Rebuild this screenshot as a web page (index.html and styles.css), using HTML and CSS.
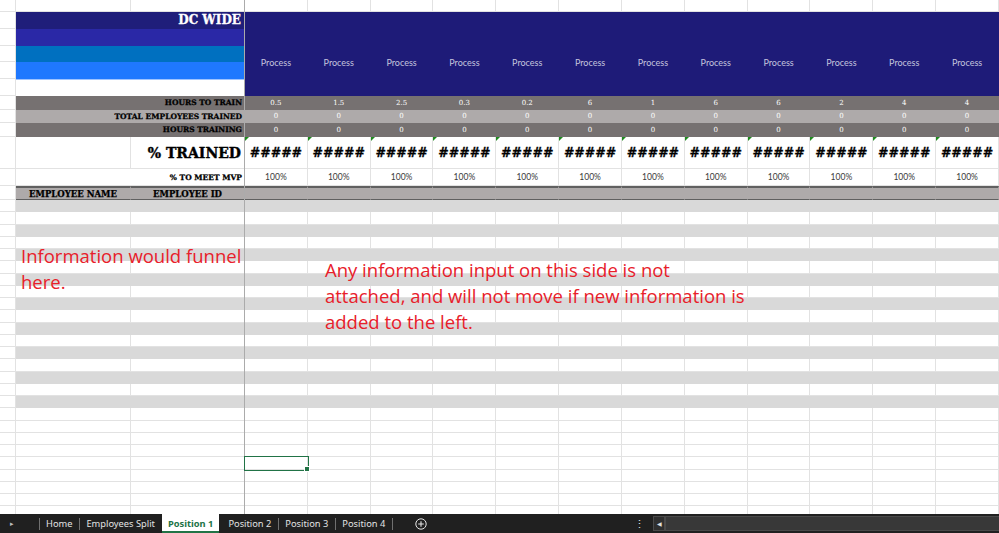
FILE: index.html
```html
<!DOCTYPE html>
<html lang="en">

<head>
  <meta charset="UTF-8" />
  <meta name="viewport" content="width=device-width, initial-scale=1.0" />
  <title>Position 1 - Training Tracker</title>
  <link rel="stylesheet" href="styles.css">
</head>

<body>
  <div class="workbook">
    <div class="sheet" id="sheet"></div>

    <div class="note note-left">Information would funnel<br>here.</div>
    <div class="note note-right">Any information input on this side is not<br>attached, and will not move if new information is<br>added to the left.</div>
  </div>

  <div class="tabbar">
    <span class="tab-arrow">&#9656;</span>
    <span class="tab-sep"></span>
    <span class="tab">Home</span>
    <span class="tab-sep"></span>
    <span class="tab">Employees Split</span>
    <span class="tab active">Position 1</span>
    <span class="tab">Position 2</span>
    <span class="tab-sep"></span>
    <span class="tab">Position 3</span>
    <span class="tab-sep"></span>
    <span class="tab">Position 4</span>
    <span class="tab-sep"></span>
    <span class="tab-add">
      <svg width="12" height="12" viewBox="0 0 12 12">
        <circle cx="6" cy="6" r="5.2" fill="none" stroke="#e6e6e6" stroke-width="1" />
        <path d="M6 3.2v5.6M3.2 6h5.6" stroke="#e6e6e6" stroke-width="1.1" />
      </svg>
    </span>
    <span class="tab-fill"></span>
    <span class="tab-dots">&#8942;</span>
    <span class="scroll-left">&#9664;</span>
    <span class="scroll-track"></span>
  </div>

  <script>
    const hours = ['0.5', '1.5', '2.5', '0.3', '0.2', '6', '1', '6', '6', '2', '4', '4'];
    const sheet = document.getElementById('sheet');

    function cell(cls, text) {
      const d = document.createElement('div');
      d.className = 'cell' + (cls ? ' ' + cls : '');
      if (text) d.textContent = text;
      sheet.appendChild(d);
      return d;
    }

    function repeat(cls, text) {
      hours.forEach(() => cell(cls, text));
    }

    // row 1
    cell('col-a'); cell(); cell(); repeat('');

    // title band + process headers
    cell('col-a'); cell('band band-1', 'DC WIDE'); repeat('process', 'Process');
    ['band-2', 'band-3', 'band-4', 'band-5'].forEach(b => {
      cell('col-a');
      cell('band ' + b);
    });

    // totals
    const stats = [
      ['HOURS TO TRAIN', hours, 'dark'],
      ['TOTAL EMPLOYEES TRAINED', hours.map(() => '0'), 'light'],
      ['HOURS TRAINING', hours.map(() => '0'), 'dark']
    ];
    stats.forEach(([label, values, tone]) => {
      cell('col-a');
      cell('stat-label ' + tone, label);
      values.forEach(v => cell('stat ' + tone, v));
    });

    // percentages
    cell('col-a'); cell('pct-blank'); cell('pct-label', '% TRAINED'); repeat('pct', '#####');
    cell('col-a'); cell('mvp-label', '% TO MEET MVP'); repeat('mvp', '100%');

    // employee list
    cell('col-a'); cell('emp-head', 'EMPLOYEE NAME'); cell('emp-head', 'EMPLOYEE ID'); repeat('emp-head');
    for (let r = 0; r < 27; r++) {
      const stripe = r < 17 && r % 2 === 0 ? 'stripe' : '';
      cell('col-a');
      for (let c = 0; c < 14; c++) {
        const d = cell(stripe);
        if (r === 21 && c === 2) d.classList.add('selected');
      }
    }
  </script>
</body>

</html>
```

FILE: styles.css
```css
/* Base */
html,
body {
  margin: 0;
  padding: 0;
  background: #ffffff;
  overflow: hidden;
}

body {
  width: 999px;
  height: 533px;
  font-family: 'DejaVu Serif', serif;
}

.workbook {
  position: relative;
  height: 514px;
  overflow: hidden;
}

/* Sheet grid */
.sheet {
  display: grid;
  grid-template-columns: 16px 115px 114px repeat(12, 1fr);
  grid-template-rows: 12px 17px 17px 16px 17px 17px 14px 13px 14px 32px 17px 14px;
  grid-auto-rows: 12.25px;
  width: 999px;
}

.sheet::after {
  content: "";
  position: absolute;
  left: 244px;
  top: 0;
  bottom: 0;
  width: 1px;
  background: #ababab;
}

.cell {
  box-sizing: border-box;
  border-right: 1px solid #e2e2e2;
  border-bottom: 1px solid #e2e2e2;
  white-space: nowrap;
  overflow: hidden;
  min-width: 0;
}

/* Title band */
.band {
  grid-column: span 2;
  border-color: transparent;
}

.band-1 {
  background: #1f1e7a;
  color: #ffffff;
  font-weight: bold;
  font-size: 12px;
  -webkit-text-stroke: 0.3px #ffffff;
  text-align: right;
  padding-right: 3px;
  line-height: 17px;
}

.band-2 {
  background: #2a28a6;
}

.band-3 {
  background: #0070c0;
}

.band-4 {
  background: #1f78fe;
}

.band-5 {
  background: #ffffff;
  border-top: 1px solid #9fc3ff;
}

.process {
  grid-row: span 5;
  background: #1e1b78;
  border-color: transparent;
  color: #c4c4de;
  font-family: 'Lato', sans-serif;
  font-size: 9px;
  display: flex;
  align-items: center;
  justify-content: center;
  padding-top: 18px;
}

/* Totals */
.stat-label {
  grid-column: span 2;
  font-weight: bold;
  font-size: 7.5px;
  -webkit-text-stroke: 0.25px #000000;
  color: #000000;
  display: flex;
  align-items: center;
  justify-content: flex-end;
  padding-right: 2px;
}

.stat {
  font-size: 7px;
  color: #ffffff;
  display: flex;
  align-items: center;
  justify-content: center;
}

.dark {
  background: #767171;
  border-color: #767171;
}

.light {
  background: #aeaaaa;
  border-color: #aeaaaa;
}

/* Percent rows */
.pct-label {
  font-weight: bold;
  font-size: 14px;
  -webkit-text-stroke: 0.4px #000000;
  display: flex;
  align-items: center;
  justify-content: flex-end;
  padding-right: 3px;
}

.pct {
  position: relative;
  font-weight: bold;
  font-size: 12.5px;
  -webkit-text-stroke: 0.3px #000000;
  display: flex;
  align-items: center;
  justify-content: center;
}

.pct::before {
  content: "";
  position: absolute;
  left: 0;
  top: 0;
  border-top: 4px solid #1f8a1f;
  border-right: 4px solid transparent;
}

.mvp-label {
  grid-column: span 2;
  font-weight: bold;
  font-size: 7.5px;
  -webkit-text-stroke: 0.25px #000000;
  display: flex;
  align-items: center;
  justify-content: flex-end;
  padding-right: 2px;
}

.mvp {
  font-family: 'Lato', sans-serif;
  font-size: 8.5px;
  color: #3a3a3a;
  display: flex;
  align-items: center;
  justify-content: center;
}

/* Employee list */
.emp-head {
  background: #aeaaaa;
  border-right-color: #aeaaaa;
  border-top: 2px solid #606060;
  border-bottom: 1px solid #606060;
  font-weight: bold;
  font-size: 8.5px;
  -webkit-text-stroke: 0.25px #000000;
  display: flex;
  align-items: center;
  justify-content: center;
}

.stripe {
  background: #d9d9d9;
  border-color: #d9d9d9;
}

.selected {
  position: relative;
  overflow: visible;
  outline: 1px solid #217346;
  outline-offset: 0;
  z-index: 2;
}

.selected::after {
  content: "";
  position: absolute;
  right: -3px;
  bottom: -3px;
  width: 4px;
  height: 4px;
  background: #217346;
  border: 1px solid #ffffff;
}

/* Text boxes on the sheet */
.note {
  position: absolute;
  color: #e8202a;
  font-family: 'Open Sans', sans-serif;
  font-size: 18.5px;
  line-height: 26px;
  white-space: nowrap;
}

.note-left {
  left: 21px;
  top: 243px;
}

.note-right {
  left: 325px;
  top: 257px;
}

/* Sheet tabs */
.tabbar {
  height: 19px;
  background: #202020;
  display: flex;
  align-items: stretch;
  font-family: 'Noto Sans', sans-serif;
  font-size: 9.3px;
  color: #e3e3e3;
}

.tab-arrow {
  width: 39px;
  font-size: 7px;
  color: #bdbdbd;
  display: flex;
  align-items: center;
  padding-left: 10px;
  box-sizing: border-box;
}

.tab-sep {
  width: 1px;
  background: #707070;
  margin: 4px 0 3px;
}

.tab {
  display: flex;
  align-items: center;
  padding: 0 7px 0 6px;
}

.tab.active {
  background: #ffffff;
  color: #217346;
  font-weight: bold;
  box-shadow: inset 0 -2px 0 #217346;
  padding: 0 6px;
  margin: 0 3px 0 0;
}

.tab-add {
  display: flex;
  align-items: center;
  margin-left: 22px;
}

.tab-fill {
  flex: 1;
}

.tab-dots {
  display: flex;
  align-items: center;
  font-size: 11px;
  color: #e0e0e0;
  margin-right: 8px;
}

.scroll-left {
  width: 10px;
  display: flex;
  align-items: center;
  justify-content: center;
  font-size: 6px;
  color: #e0e0e0;
  background: #2f2f2f;
  border: 1px solid #4a4a4a;
  margin: 2px 0;
}

.scroll-track {
  width: 333px;
  background: #383838;
  border: 1px solid #4a4a4a;
  border-right: 0;
  margin: 2px 0;
}
```
